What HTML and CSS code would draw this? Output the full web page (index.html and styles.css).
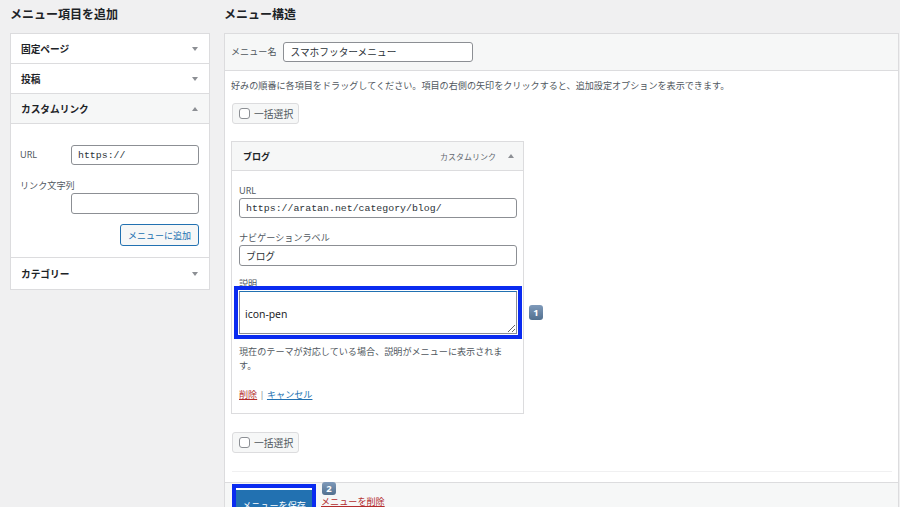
FILE: index.html
```html
<!DOCTYPE html>
<html lang="ja">
<head>
<meta charset="utf-8">
<title>メニュー</title>
<link rel="stylesheet" href="styles.css">
</head>
<body>
<div class="page">
  <div class="col-left">
    <h2 class="title">メニュー項目を追加</h2>
    <div class="acc">
      <div class="acc-row"><span>固定ページ</span><span class="tri down"></span></div>
      <div class="acc-row"><span>投稿</span><span class="tri down"></span></div>
      <div class="acc-row open"><span>カスタムリンク</span><span class="tri up"></span></div>
      <div class="acc-body">
        <div class="lfield">
          <span class="lbl lbl-url">URL</span>
          <input class="inp mono linp" type="text" value="https://">
        </div>
        <div class="lbl lbl-block">リンク文字列</div>
        <input class="inp linp indent" type="text" value="">
        <div class="btn-row"><button class="btn-sec">メニューに追加</button></div>
      </div>
      <div class="acc-row last"><span>カテゴリー</span><span class="tri down"></span></div>
    </div>
  </div>

  <div class="col-right">
    <h2 class="title">メニュー構造</h2>
    <div class="panel">
      <div class="panel-head">
        <span class="lbl">メニュー名</span>
        <input class="inp name" type="text" value="スマホフッターメニュー">
      </div>
      <div class="panel-body">
        <p class="instr">好みの順番に各項目をドラッグしてください。項目の右側の矢印をクリックすると、追加設定オプションを表示できます。</p>
        <div class="bulk"><span class="cb"></span><span>一括選択</span></div>

        <div class="item">
          <div class="item-head">
            <span class="item-title">ブログ</span>
            <span class="item-meta"><span>カスタムリンク</span><span class="tri up"></span></span>
          </div>
          <div class="item-body">
            <div class="lbl line">URL</div>
            <input class="inp mono wide" type="text" value="https://aratan.net/category/blog/">
            <div class="lbl line gap13">ナビゲーションラベル</div>
            <input class="inp wide tall" type="text" value="ブログ">
            <div class="lbl line gap11">説明</div>
            <div class="ta-wrap">
              <textarea class="ta">icon-pen</textarea>
              <span class="badge badge-1">1</span>
            </div>
            <p class="desc">現在のテーマが対応している場合、説明がメニューに表示されます。</p>
            <div class="links"><a class="del" href="#">削除</a><span class="pipe"> | </span><a class="cancel" href="#">キャンセル</a></div>
          </div>
        </div>

        <div class="bulk bulk2"><span class="cb"></span><span>一括選択</span></div>
        <div class="sep"></div>
      </div>
      <div class="panel-foot">
        <button class="save">メニューを保存</button>
        <span class="del-menu"><a class="del" href="#">メニューを削除</a><span class="badge badge-2">2</span></span>
      </div>
    </div>
  </div>
</div>
</body>
</html>
```

FILE: styles.css
```css
* { box-sizing: border-box; }
html, body { margin: 0; padding: 0; }
body {
  background: #f0f0f1;
  font-family: "Noto Sans", "Noto Sans CJK JP", sans-serif;
  color: #1d2327;
  font-size: 9.1px;
  width: 900px;
  height: 507px;
  overflow: hidden;
}
.page { display: flex; gap: 14px; padding-left: 10px; align-items: flex-start; }
.col-left { width: 200px; flex: none; }
.col-right { width: 675px; flex: none; }
.title {
  margin: 0;
  height: 33px;
  line-height: 30px;
  font-size: 12px;
  font-weight: 700;
  color: #1d2327;
}

/* left accordion */
.acc { background: #fff; border: 1px solid #dcdcde; }
.acc-row {
  height: 30px;
  display: flex;
  align-items: center;
  justify-content: space-between;
  padding: 0 11px 0 10px;
  font-weight: 700;
  font-size: 9.7px;
  border-bottom: 1px solid #dcdcde;
}
.acc-row.open { background: #f6f7f7; }
.acc-row.last { border-bottom: 0; height: 31px; }
.tri { width: 0; height: 0; border-left: 3px solid transparent; border-right: 3px solid transparent; }
.tri.down { border-top: 4px solid #8c8f94; }
.tri.up { border-bottom: 4px solid #8c8f94; }

.acc-body {
  height: 134px;
  border-bottom: 1px solid #dcdcde;
  padding: 21px 10px 0 9px;
}
.lfield { display: flex; align-items: center; }
.lbl { color: #50575e; font-size: 9.1px; line-height: 14px; }
.lbl-url { width: 51px; flex: none; }
.lbl-block { margin-top: 14px; }
.inp {
  display: block;
  height: 20px;
  border: 1px solid #8c8f94;
  border-radius: 3px;
  background: #fff;
  padding: 0 6px;
  font-family: "Noto Sans", "Noto Sans CJK JP", sans-serif;
  font-size: 9.7px;
  color: #2c3338;
  margin: 0;
}
.mono { font-family: "Liberation Mono", "DejaVu Sans Mono", monospace; font-size: 9.9px; }
.linp { width: 128px; }
.indent { margin-left: 51px; height: 21px; }
.btn-row { display: flex; justify-content: flex-end; margin-top: 10px; }
.btn-sec {
  width: 79px;
  height: 22px;
  border: 1px solid #2271b1;
  border-radius: 3px;
  background: #f6f7f7;
  color: #2271b1;
  font-family: "Noto Sans", "Noto Sans CJK JP", sans-serif;
  font-size: 9px;
  padding: 0;
}

/* right panel */
.panel { background: #fff; border: 1px solid #dcdcde; }
.panel-head {
  height: 37px;
  background: #f6f7f7;
  border-bottom: 1px solid #dcdcde;
  display: flex;
  align-items: center;
  gap: 7px;
  padding-left: 6px;
}
.name { width: 190px; }
.panel-body { padding: 8px 6px 10px 6px; }
.instr { margin: 0; line-height: 14px; color: #50575e; font-size: 9.1px; }
.bulk {
  display: flex;
  align-items: center;
  gap: 4px;
  width: 67px;
  height: 21px;
  margin: 10px 0 0 1px;
  padding-left: 6px;
  border: 1px solid #dcdcde;
  border-radius: 3px;
  background: #f6f7f7;
  color: #50575e;
  font-size: 9.8px;
}
.bulk2 { margin-top: 18px; }
.cb { width: 11px; height: 11px; border: 1px solid #8c8f94; border-radius: 3px; background: #fff; flex: none; }

.item { width: 293px; margin-top: 17px; border: 1px solid #dcdcde; }
.item-head {
  height: 29px;
  background: #f6f7f7;
  border-bottom: 1px solid #dcdcde;
  display: flex;
  align-items: center;
  justify-content: space-between;
  padding: 0 9px 0 11px;
}
.item-title { font-weight: 700; font-size: 9px; }
.item-meta { display: flex; align-items: center; gap: 12px; color: #646970; font-size: 8px; }
.item-body { padding: 13px 6px 11px 7px; }
.line { display: block; }
.gap13 { margin-top: 13px; }
.gap11 { margin-top: 11px; }
.wide { width: 278px; }
.tall { height: 21px; }
.ta-wrap { position: relative; width: 278px; height: 43px; }
.ta {
  display: block;
  width: 278px;
  height: 43px;
  margin: 0;
  resize: vertical;
  border: 1px solid #8c8f94;
  border-top-color: #2271b1;
  border-radius: 0;
  padding: 15px 5px 0 5px;
  font-family: "Noto Sans", "Noto Sans CJK JP", sans-serif;
  font-size: 10.4px;
  line-height: 14px;
  color: #1d2327;
  outline: 4px solid #0a2bf0;
  outline-offset: 1px;
}
.badge {
  position: absolute;
  width: 14px;
  height: 15px;
  border-radius: 3px;
  background: linear-gradient(#7f9aba, #52708f);
  color: #fff;
  font-weight: 700;
  font-size: 9.5px;
  line-height: 15px;
  text-align: center;
}
.badge-1 { left: 290px; top: 14px; }
.desc { margin: 11px 0 0; line-height: 14px; color: #50575e; font-size: 9.1px; }
.links { margin-top: 15px; line-height: 14px; font-size: 9.1px; }
.del { color: #b32d2e; text-decoration: underline; }
.cancel { color: #2271b1; text-decoration: underline; }
.pipe { color: #8c8f94; }
.sep { height: 1px; background: #f0f0f1; margin-top: 18px; margin-left: 1px; }

.panel-foot {
  height: 40px;
  border-top: 1px solid #dcdcde;
  background: #f6f7f7;
  display: flex;
  align-items: flex-start;
  padding: 5px 0 0 11px;
}
.save {
  width: 76px;
  height: 28px;
  background: #2271b1;
  color: #fff;
  border: 0;
  border-top: 2px solid #fff;
  outline: 4px solid #0a2bf0;
  font-family: "Noto Sans", "Noto Sans CJK JP", sans-serif;
  font-size: 9.1px;
  padding: 6px 0 0;
  line-height: 14px;
  flex: none;
}
.del-menu { position: relative; margin: 7px 0 0 9px; line-height: 14px; font-size: 9.1px; }
.badge-2 { left: 1px; top: -13px; height: 13px; line-height: 13px; }
```
